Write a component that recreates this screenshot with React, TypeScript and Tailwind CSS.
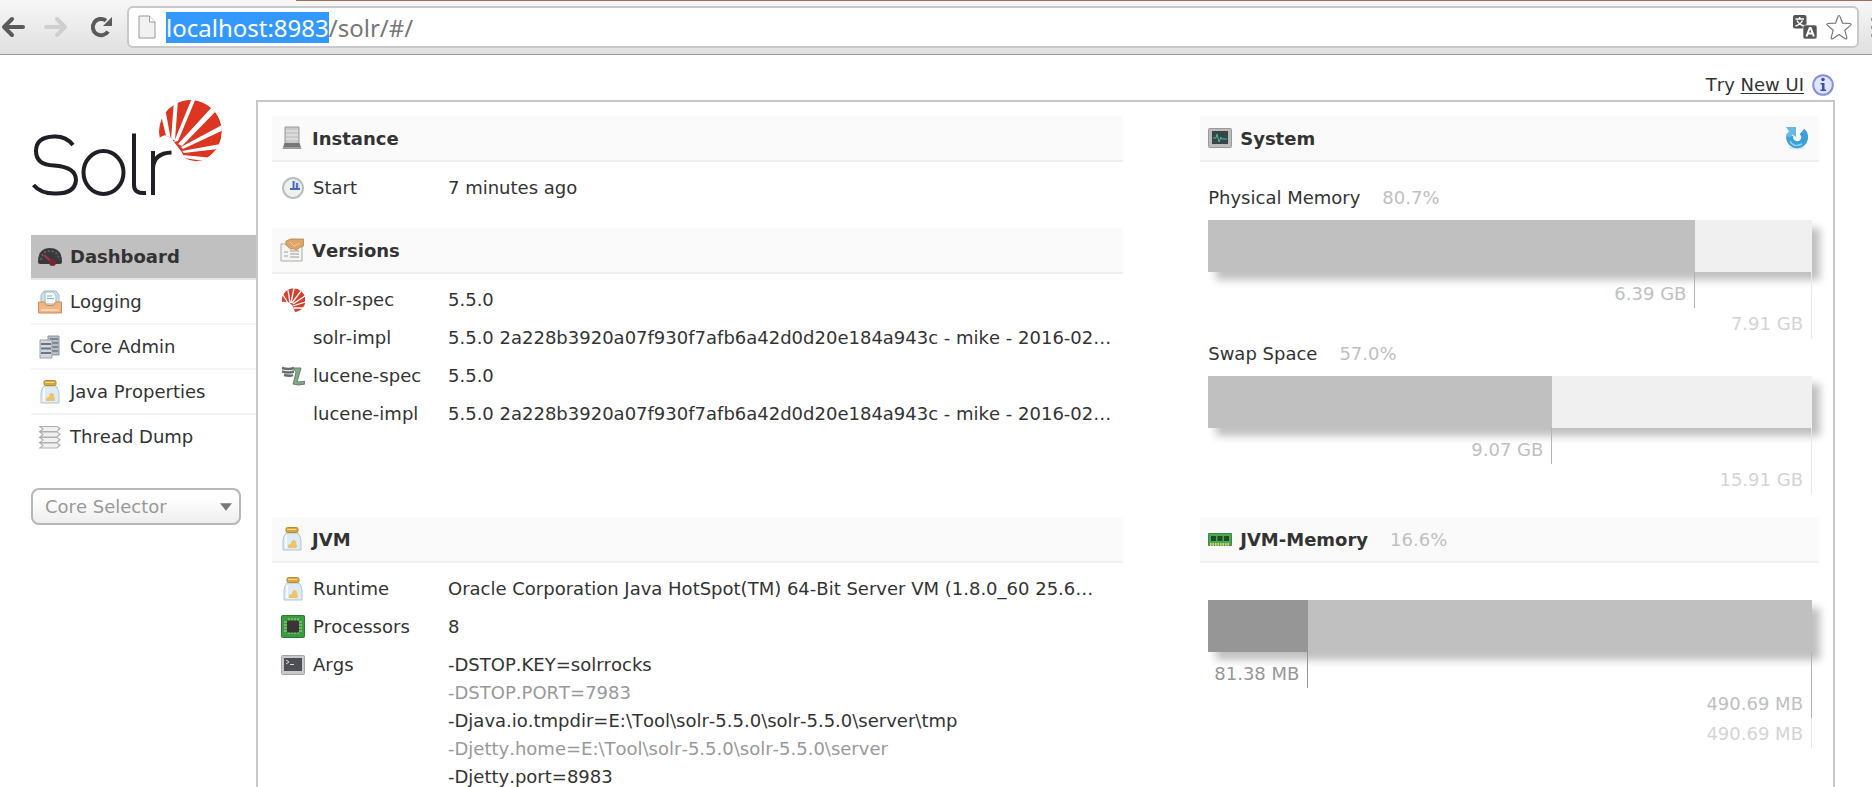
import type { ReactNode } from "react";

function Arrow({ flip = false }: { flip?: boolean }) {
  return (
    <svg width="25" height="24" viewBox="0 0 25 24" fill="none" strokeLinecap="round" strokeLinejoin="round">
      {flip ? (
        <path d="M2 12h19M13 4l8 8-8 8" stroke="#cfcfcf" strokeWidth="4" />
      ) : (
        <path d="M23 12H4M12 4l-8 8 8 8" stroke="#5a5a5a" strokeWidth="4" />
      )}
    </svg>
  );
}

function Reload() {
  return (
    <svg width="24" height="24" viewBox="0 0 24 24" fill="none">
      <path d="M19 16.500A8.200 8.200 0 1 1 17 5.600" stroke="#5a5a5a" strokeWidth="4" />
      <path d="M23 2v9h-9z" fill="#5a5a5a" />
    </svg>
  );
}

function PageIcon() {
  return (
    <svg width="18" height="24" viewBox="0 0 18 24">
      <path d="M1 1h10.500l5.500 6v16H1z" fill="#f1f1f1" stroke="#999" />
      <path d="M11.500 1v6H17" fill="#fff" stroke="#999" />
    </svg>
  );
}

function Translate() {
  return (
    <svg width="24" height="24" viewBox="0 0 24 24">
      <rect width="13.500" height="13.500" rx="2" fill="#555" />
      <path d="M2.500 4h8.500M6.700 2v2M4 5.500q2 4 7 5.500M9.500 5.500q-2 4-7 5.500" stroke="#fff" strokeWidth="1.500" fill="none" />
      <rect x="10" y="10" width="14" height="14" rx="2" fill="#555" stroke="#fff" strokeWidth=".6" />
      <path d="M13.500 21.500l3.200-8.500h1l3.200 8.500M14.800 18.500h5" stroke="#fff" strokeWidth="2" fill="none" />
    </svg>
  );
}

function Star() {
  return (
    <svg width="28" height="28" viewBox="0 0 28 28">
      <path
        d="M14 2.500q.8 0 1.200 1.500l2.300 6.200 7.500.3q2 .5.500 1.900l-5.700 4.800 2 7.500q.2 1.800-1.600 1L14 21.500l-6.200 4.200q-1.800.8-1.600-1l2-7.500-5.700-4.800q-1.500-1.400.5-1.900l7.500-.3L12.800 4q.4-1.500 1.200-1.500z"
        fill="#fff"
        stroke="#777"
        strokeWidth="1.200"
        strokeLinejoin="round"
      />
    </svg>
  );
}

function SolrLogo() {
  return (
    <svg width="192" height="100" viewBox="0 0 192 100" role="img" aria-label="Solr">
      <defs>
        <clipPath id="sun">
          <path d="M128.500 38A31.500 31.500 0 1 1 171 60.500Q162 63 154 58L150 51 140 38Q133 33 128.500 38z" />
        </clipPath>
      </defs>
      <g clipPath="url(#sun)">
        <circle cx="159.500" cy="31.500" r="31.500" fill="#dc3522" />
        <g fill="#fff">
          <path d="M136 40l-7-29 5-3 6 32z" />
          <path d="M140 40l3-40h4l-3 40z" />
          <path d="M143 42l18-44h4l-18 43z" />
          <path d="M147 44l34-37 5 3-35 36z" />
          <path d="M150 47l43-23 2 5-43 20z" />
          <path d="M151 51l44-8v5l-42 5z" />
          <path d="M151 55l43 4-2 5-39-6z" />
          <path d="M126 40l8-5 21 23-9 9z" />
        </g>
      </g>
      <g transform="translate(1 0)" fill="none" stroke="#1f1f27" strokeWidth="4">
        <path d="M41 45Q34 36 22 36.500Q4 37 4 51Q4 65 22 65.500Q44 67 44 80Q43 93.500 24 93.500Q9 94 1.500 85" />
        <ellipse cx="71.500" cy="72.500" rx="20" ry="21.500" />
        <path d="M102 33.500V85q0 9 12 8M121 95V51M121 68Q122 53 139.500 52.500" />
      </g>
    </svg>
  );
}

function Icon({ children }: { children?: ReactNode }) {
  return (
    <svg className="shrink-0" width="24" height="24" viewBox="0 0 24 24" aria-hidden="true">
      {children}
    </svg>
  );
}

const icons: Record<string, ReactNode> = {
  dashboard: (
    <>
      <path d="M0 17Q0 3 12 3t12 14q0 2-2 2H2q-2 0-2-2z" fill="#3a3a3d" />
      <path d="M3 15Q4 6 12 6t9 9" fill="none" stroke="#666" strokeWidth="1.500" strokeDasharray="2 2" />
      <path d="M6 10l9 8" stroke="#a8354a" strokeWidth="2" />
      <circle cx="14.500" cy="17.500" r="3.500" fill="#712b38" />
    </>
  ),
  logging: (
    <>
      <path d="M3 5l3-4h12l3 4v9H3z" fill="#cfe3ea" stroke="#9db7c1" />
      <path d="M7 2h8l3 3v9H7z" fill="#f3fbfd" stroke="#9dbbc8" />
      <path d="M9 6h5M9 8.500h7" stroke="#83b3c0" />
      <path d="M.5 12h6l2 3.500h7l2-3.500h6v11H.5z" fill="#f1b483" stroke="#d18a58" />
      <path d="M3 20h18" stroke="#fbd5b5" strokeWidth="2" />
    </>
  ),
  cores: (
    <>
      <path d="M10 1h11v19H10z" fill="#b4bcc6" stroke="#8d949e" />
      <path d="M12 4h8M12 8h8M12 12h8M12 16h8" stroke="#6c7683" strokeWidth="1.500" />
      <path d="M2 5h12v18H2z" fill="#d3d8de" stroke="#9aa0a8" />
      <path d="M3 9h10M3 13.500h10M3 18h10" stroke="#6d7580" strokeWidth="2" />
    </>
  ),
  jar: (
    <>
      <path d="M6 6h12q3 4 3 8v9H3v-9q0-4 3-8z" fill="#deebf4" stroke="#b3c5d1" />
      <rect x="6" y=".5" width="12" height="5" rx="1.500" fill="#d9a93f" stroke="#b78a35" />
      <path d="M7 2.500h9" stroke="#f6dc93" />
      <path d="M8 21q-1-4 3-4 0-4 3-4 3 1 2 4 2 2 0 4z" fill="#ecc46c" />
      <path d="M6 8v13" stroke="#fff" strokeWidth="1.500" />
    </>
  ),
  thread: (
    <g fill="#f0f0f0" stroke="#b0b0b0" strokeWidth="1.200">
      <path d="M2 18h17l3 2-3 3H2l3-2.500z" />
      <path d="M2 12.500h17l3 2-3 3H2l3-2.500z" />
      <path d="M2 7h17l3 2-3 3H2l3-2.500z" />
      <path d="M2 1.500h17l3 2-3 3H2l3-2.500z" />
    </g>
  ),
  server: (
    <>
      <path d="M5 1h14v17H5z" fill="#c9c9c9" stroke="#9a9a9a" />
      <path d="M6 5h12M6 9h12M6 13h12" stroke="#ededed" />
      <path d="M4.500 17h15l2 6h-19z" fill="#777" />
      <path d="M3 22h18" stroke="#aaa" strokeWidth="1.500" />
    </>
  ),
  clock: (
    <>
      <circle cx="12" cy="12" r="10" fill="#eef0f2" stroke="#b9bdc0" strokeWidth="2" />
      <path d="M12 5h2a6 6 0 0 1 5 7v2h-7z" fill="#cbd7f3" />
      <path d="M12.500 5v8H19M9 13h3.500M16 7v5" stroke="#4a66b5" strokeWidth="1.800" fill="none" />
    </>
  ),
  versions: (
    <>
      <path d="M1 6h21v17H1z" fill="#f5f5f4" stroke="#aeaaa5" />
      <path d="M4 14h4M4 18h4M10 13h9M10 16h9M10 19h9" stroke="#b9b9b9" strokeWidth="1.300" />
      <path d="M6 3q5-3 9-2h8.500v7q-4 1-7 4-3-2-6-1L6 7z" fill="#dfa566" stroke="#b9844c" strokeWidth=".8" />
      <path d="M10 4l4 4 6-3" stroke="#f3cd98" fill="none" />
    </>
  ),
  solr: (
    <>
      <path d="M1 14A11.800 11.800 0 1 1 14 24q-1-4-3-7-4-4-10-3z" fill="#d6402e" />
      <path d="M7 15L2 7M9 15L7 2M10 15l3-15M11 15l9-12M12 16l12-8M12 18l12-4M13 20l11 0" stroke="#fff" strokeWidth="1.300" />
    </>
  ),
  lucene: (
    <>
      <path d="M1 4q7 2 12 0M1 7.500q7 2 12 0M3 11q6 1.500 9 0" stroke="#666d6b" strokeWidth="2.500" fill="none" />
      <path d="M12 4h8l-4 14 8-.5v2.500q-7 2-12 0 2-6 3-12z" fill="#82a98a" stroke="#647f6a" />
    </>
  ),
  cpu: (
    <>
      <rect x=".5" y=".5" width="23" height="22" rx="1" fill="#3b9a42" stroke="#287b30" />
      <path d="M8 3v16M11 3v16M14 3v16M17 3v16M3 7h18M3 10h18M3 13h18M3 16h18" stroke="#a3d982" />
      <rect x="6" y="5.500" width="12" height="12" rx="1" fill="#3a3437" />
    </>
  ),
  terminal: (
    <>
      <rect x=".5" y="2.500" width="23" height="19" rx="1" fill="#c9c9cb" stroke="#a5a5a8" />
      <path d="M3 5h18v13H3z" fill="#4c4f55" />
      <path d="M5 7l3 2-3 2M9 11.500h4" stroke="#ddd" fill="none" />
    </>
  ),
  system: (
    <>
      <rect x=".5" y="2.500" width="23" height="19" rx="1" fill="#bcbcbc" stroke="#999" />
      <path d="M4 5h16v13H4z" fill="#3a4548" />
      <path d="M5 12h3l1-4 2 8 2-5 1 2h5" stroke="#4bbd99" fill="none" />
    </>
  ),
  memory: (
    <>
      <path d="M.5 6.500h23v12H.5z" fill="#4ca653" stroke="#3a8b42" />
      <path d="M3 9h5v5H3zM9.500 9h5v5h-5zM16 9h5v5h-5z" fill="#1e4a26" />
      <path d="M2 17.500h20" stroke="#d6cf7d" strokeWidth="3" strokeDasharray="1.500 1" />
    </>
  ),
  refresh: (
    <>
      <ellipse cx="12" cy="22" rx="8" ry="1.500" fill="#d5e6ee" />
      <path d="M17 5.500A7.500 7.500 0 1 1 5 9" fill="none" stroke="#3b9fda" strokeWidth="7" />
      <path d="M1 1h10v10L7.500 8.500 4.500 12 1 9l3-3.500z" fill="#69b9e4" />
      <path d="M5 15q3 7 12 3" fill="none" stroke="#8fd3f2" strokeWidth="1.500" />
    </>
  ),
  info: (
    <>
      <circle cx="12" cy="12" r="9.800" fill="#dfe5fa" stroke="#8790e0" strokeWidth="2" />
      <circle cx="12" cy="6.500" r="1.800" fill="#3c4fae" />
      <path d="M9.500 10h4v6.500h1.500V18H9.500v-1.500H11v-5H9.500z" fill="#3c4fae" />
    </>
  ),
};

const nav = [
  { label: "Dashboard", icon: "dashboard", active: true },
  { label: "Logging", icon: "logging" },
  { label: "Core Admin", icon: "cores" },
  { label: "Java Properties", icon: "jar" },
  { label: "Thread Dump", icon: "thread" },
];

const versions = [
  { label: "solr-spec", icon: "solr", value: "5.5.0" },
  { label: "solr-impl", value: "5.5.0 2a228b3920a07f930f7afb6a42d0d20e184a943c - mike - 2016-02…" },
  { label: "lucene-spec", icon: "lucene", value: "5.5.0" },
  { label: "lucene-impl", value: "5.5.0 2a228b3920a07f930f7afb6a42d0d20e184a943c - mike - 2016-02…" },
];

const args = [
  "-DSTOP.KEY=solrrocks",
  "-DSTOP.PORT=7983",
  "-Djava.io.tmpdir=E:\\Tool\\solr-5.5.0\\solr-5.5.0\\server\\tmp",
  "-Djetty.home=E:\\Tool\\solr-5.5.0\\solr-5.5.0\\server",
  "-Djetty.port=8983",
];

function Heading({ icon, title, extra, action }: { icon: string; title: string; extra?: string; action?: ReactNode }) {
  return (
    <div className="flex h-[46px] items-center border-b-2 border-[#f0f0f0] bg-[#fafafa] px-2">
      <Icon>{icons[icon]}</Icon>
      <h2 className="ml-2 font-bold">{title}</h2>
      {extra && <span className="ml-[22px] text-[#c0c0c0]">{extra}</span>}
      {action && <span className="mr-[2px] ml-auto flex">{action}</span>}
    </div>
  );
}

function Row({ icon, label, children }: { icon?: string; label: string; children: ReactNode }) {
  return (
    <div className="flex pb-[10px] pl-[9px] leading-7">
      <dt className="flex w-[167px] shrink-0 items-center gap-2 self-start">
        <span className="flex size-6">{icon && <Icon>{icons[icon]}</Icon>}</span>
        {label}
      </dt>
      <dd className="min-w-0 flex-1 truncate">{children}</dd>
    </div>
  );
}

interface Mark {
  text: string;
  percent: number;
  // fill of the bar part, its tick line and its caption
  fill: string;
  line: string;
  color: string;
  tick: string;
}

function Bar({ marks }: { marks: Mark[] }) {
  return (
    <div className="relative mr-[7px] ml-2 h-[52px] bg-[#f0f0f0] shadow-[8px_8px_8px_rgba(0,0,0,0.25)]">
      {marks.map((m, i) => (
        <div key={i} className={`absolute top-0 left-0 h-full ${m.fill}`} style={{ width: `${m.percent}%`, zIndex: marks.length - i }}>
          <div className={`absolute top-full right-0 flex items-end border-r pr-2 leading-7 whitespace-nowrap ${m.tick} ${m.line} ${m.color}`}>
            {m.text}
          </div>
        </div>
      ))}
    </div>
  );
}

const used = { fill: "bg-[#c0c0c0]", line: "border-[#b4b4b4]", color: "text-[#c0c0c0]" };
const max = { fill: "bg-[#f0f0f0]", line: "border-[#e8e8e8]", color: "text-[#d4d4d4]", percent: 100 };

export default function App() {
  return (
    <div className="h-screen overflow-hidden bg-white font-['DejaVu_Sans',Verdana,sans-serif] text-[18px] text-[#333] [font-kerning:none]">
      <header className="relative flex h-[55px] items-center border-b border-[#999] bg-linear-to-b from-[#f7f7f7] to-[#e0e0e0]">
        {/* lower edge of the tab strip */}
        <div className="absolute top-0 right-0 left-[296px] h-px bg-[#9b6f60]" />
        <button aria-label="Back" className="flex w-[44px]"><Arrow /></button>
        <button aria-label="Forward" className="flex w-[44px]"><Arrow flip /></button>
        <button aria-label="Reload" className="flex w-[39px] pl-px"><Reload /></button>
        <div className="flex h-[42px] flex-1 items-center rounded-md border-2 border-[#c8c8c8] bg-white pr-1 pl-[9px]">
          <PageIcon />
          <p className="ml-[10px] flex-1 font-['Noto_Sans',sans-serif] text-[24px] leading-[31px] text-[#777]">
            <span className="inline-block bg-[#3399ff] text-white">localhost:8983</span>/solr/#/
          </p>
          <button aria-label="Translate" className="mr-2 flex"><Translate /></button>
          <button aria-label="Bookmark" className="flex"><Star /></button>
        </div>
        <button aria-label="Menu" className="flex w-[13px] flex-col items-end gap-[5px]">
          <i className="h-[3px] w-px bg-[#999]" />
          <i className="h-[3px] w-px bg-[#999]" />
          <i className="h-[3px] w-px bg-[#999]" />
        </button>
      </header>

      <div className="flex">
        <aside className="w-[256px] shrink-0 pt-[45px] pl-[31px]">
          <a href="#/" className="block"><SolrLogo /></a>
          <nav className="mt-[35px]">
            {nav.map((item) => (
              <a
                key={item.label}
                href="#/"
                className={`flex h-[45px] items-center gap-2 border-b-2 pl-[7px] last:border-transparent ${
                  item.active ? "border-[#e6e6e6] bg-[#c0c0c0] font-bold" : "border-[#f4f4f4]"
                }`}
              >
                <Icon>{icons[item.icon]}</Icon>
                {item.label}
              </a>
            ))}
          </nav>
          <div className="relative mt-7 mr-[15px]">
            <select
              aria-label="Core Selector"
              className="h-[37px] w-full appearance-none rounded-lg border-2 border-[#b8b8b8] bg-linear-to-b from-white from-20% to-[#eee] pl-3 text-[#999]"
            >
              <option>Core Selector</option>
            </select>
            <svg className="pointer-events-none absolute top-[15px] right-[9px]" width="12" height="8" viewBox="0 0 13 8">
              <path d="M0 0h13L6.500 8z" fill="#777" />
            </svg>
          </div>
        </aside>

        <div className="mr-[37px] min-w-0 flex-1">
          <div className="flex h-[45px] items-center justify-end pt-[14px]">
            Try&nbsp;<a href="#/" className="underline underline-offset-2">New UI</a>
            <button aria-label="About the new UI" className="ml-[7px] flex"><Icon>{icons.info}</Icon></button>
          </div>

          <main className="flex h-screen justify-between border-2 border-[#c8c8c8] px-[14px] pt-[14px]">
            <div className="w-[55%]">
              <section>
                <Heading icon="server" title="Instance" />
                <dl className="pt-3">
                  <Row icon="clock" label="Start">7 minutes ago</Row>
                </dl>
              </section>

              <section className="mt-4">
                <Heading icon="versions" title="Versions" />
                <dl className="pt-3">
                  {versions.map((v) => (
                    <Row key={v.label} icon={v.icon} label={v.label}>{v.value}</Row>
                  ))}
                </dl>
              </section>

              <section className="mt-[79px]">
                <Heading icon="jar" title="JVM" />
                <dl className="pt-3">
                  <Row icon="jar" label="Runtime">Oracle Corporation Java HotSpot(TM) 64-Bit Server VM (1.8.0_60 25.6…</Row>
                  <Row icon="cpu" label="Processors">8</Row>
                  <Row icon="terminal" label="Args">
                    {args.map((arg, i) => (
                      <div key={arg} className={i % 2 ? "text-[#999]" : ""}>{arg}</div>
                    ))}
                  </Row>
                </dl>
              </section>
            </div>

            <div className="w-[40%]">
              <section>
                <Heading
                  icon="system"
                  title="System"
                  action={<button aria-label="Refresh" className="flex"><Icon>{icons.refresh}</Icon></button>}
                />
                <h3 className="mt-[22px] mb-2 px-2 leading-7">
                  Physical Memory<span className="ml-[22px] text-[#c0c0c0]">80.7%</span>
                </h3>
                <Bar
                  marks={[
                    { ...used, text: "6.39 GB", percent: 80.7, tick: "h-[36px]" },
                    { ...max, text: "7.91 GB", tick: "h-[66px]" },
                  ]}
                />
                <h3 className="mt-[68px] mb-2 px-2 leading-7">
                  Swap Space<span className="ml-[22px] text-[#c0c0c0]">57.0%</span>
                </h3>
                <Bar
                  marks={[
                    { ...used, text: "9.07 GB", percent: 57, tick: "h-[36px]" },
                    { ...max, text: "15.91 GB", tick: "h-[66px]" },
                  ]}
                />
              </section>

              <section className="mt-[89px]">
                <Heading icon="memory" title="JVM-Memory" extra="16.6%" />
                <div className="pt-[37px]">
                  <Bar
                    marks={[
                      { text: "81.38 MB", percent: 16.6, fill: "bg-[#969696]", line: "border-[#969696]", color: "text-[#969696]", tick: "h-[36px]" },
                      { ...used, text: "490.69 MB", percent: 100, tick: "h-[66px]" },
                      { ...max, text: "490.69 MB", tick: "h-[96px]" },
                    ]}
                  />
                </div>
              </section>
            </div>
          </main>
        </div>
      </div>
    </div>
  );
}
